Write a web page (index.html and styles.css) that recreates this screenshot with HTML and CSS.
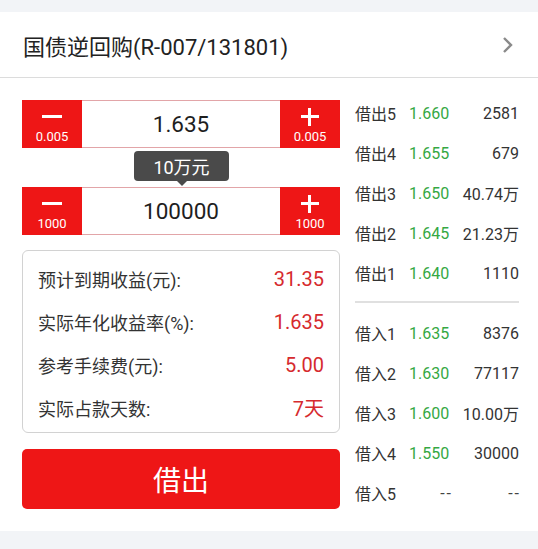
FILE: index.html
```html
<!DOCTYPE html>
<html lang="zh-CN">
<head>
    <meta charset="UTF-8">
    <meta name="viewport" content="width=device-width, initial-scale=1.0">
    <title>国债逆回购</title>
    <link rel="stylesheet" href="styles.css">
</head>
<body>
    <div class="page">
        <div class="header">
            <span class="title">国债逆回购(R-007/131801)</span>
            <svg class="chevron" width="12" height="18" viewBox="0 0 12 18">
                <path d="M2 2 L9 9 L2 16" fill="none" stroke="#8a8a8a" stroke-width="2.4"/>
            </svg>
        </div>

        <div class="main">
            <div class="left">
                <div class="stepper">
                    <div class="step-btn">
                        <span class="minus"></span>
                        <span class="step-val">0.005</span>
                    </div>
                    <div class="step-input">1.635</div>
                    <div class="step-btn">
                        <span class="plus"></span>
                        <span class="step-val">0.005</span>
                    </div>
                </div>

                <div class="stepper stepper-amount">
                    <div class="tooltip">10万元</div>
                    <div class="step-btn">
                        <span class="minus"></span>
                        <span class="step-val">1000</span>
                    </div>
                    <div class="step-input">100000</div>
                    <div class="step-btn">
                        <span class="plus"></span>
                        <span class="step-val">1000</span>
                    </div>
                </div>

                <div class="info">
                    <div class="info-row"><span>预计到期收益(元):</span><span class="info-val">31.35</span></div>
                    <div class="info-row"><span>实际年化收益率(%):</span><span class="info-val">1.635</span></div>
                    <div class="info-row"><span>参考手续费(元):</span><span class="info-val">5.00</span></div>
                    <div class="info-row"><span>实际占款天数:</span><span class="info-val">7天</span></div>
                </div>

                <button class="lend-btn">借出</button>
            </div>

            <div class="book">
                <div class="book-row"><span>借出5</span><span class="price">1.660</span><span class="vol">2581</span></div>
                <div class="book-row"><span>借出4</span><span class="price">1.655</span><span class="vol">679</span></div>
                <div class="book-row"><span>借出3</span><span class="price">1.650</span><span class="vol">40.74万</span></div>
                <div class="book-row"><span>借出2</span><span class="price">1.645</span><span class="vol">21.23万</span></div>
                <div class="book-row"><span>借出1</span><span class="price">1.640</span><span class="vol">1110</span></div>
                <div class="book-sep"></div>
                <div class="book-row"><span>借入1</span><span class="price">1.635</span><span class="vol">8376</span></div>
                <div class="book-row"><span>借入2</span><span class="price">1.630</span><span class="vol">77117</span></div>
                <div class="book-row"><span>借入3</span><span class="price">1.600</span><span class="vol">10.00万</span></div>
                <div class="book-row"><span>借入4</span><span class="price">1.550</span><span class="vol">30000</span></div>
                <div class="book-row"><span>借入5</span><span class="price dash">--</span><span class="vol dash">--</span></div>
            </div>
        </div>
    </div>
</body>
</html>
```

FILE: styles.css
```css
body {
    margin: 0;
    padding: 12px 0 0;
    background-color: #f2f4f7;
    font-family: Roboto, "Noto Sans CJK SC", sans-serif;
    color: #333;
}
.page {
    background-color: #fff;
    height: 519px;
}
.header {
    height: 65px;
    display: flex;
    align-items: center;
    justify-content: space-between;
    padding: 0 24px 0 23px;
    border-bottom: 1px solid #dcdcdc;
}
.title {
    font-size: 22px;
    color: #222;
}
.main {
    display: flex;
    padding: 15px 19px 0 22px;
    gap: 15px;
}
.left {
    width: 318px;
    padding-top: 7px;
}
.stepper {
    position: relative;
    display: flex;
    height: 48px;
}
.stepper-amount {
    margin-top: 39px;
}
.step-btn {
    width: 60px;
    background-color: #ee1616;
    color: #fff;
    display: flex;
    flex-direction: column;
    align-items: center;
    justify-content: flex-end;
    padding-bottom: 3px;
    box-sizing: border-box;
}
.step-val {
    font-size: 13px;
    line-height: 16px;
}
.minus {
    width: 20px;
    height: 3px;
    background: #fff;
    margin-bottom: 11px;
}
.plus {
    position: relative;
    width: 18px;
    height: 18px;
    margin-bottom: 3px;
}
.plus::before,
.plus::after {
    content: "";
    position: absolute;
    background: #fff;
}
.plus::before {
    left: 0;
    top: 7px;
    width: 18px;
    height: 3px;
}
.plus::after {
    left: 7px;
    top: 0;
    width: 3px;
    height: 18px;
}
.step-input {
    flex: 1;
    border-top: 1px solid #e2a5a8;
    border-bottom: 1px solid #e2a5a8;
    display: flex;
    align-items: center;
    justify-content: center;
    font-size: 22.5px;
    color: #1e1e1e;
}
.tooltip {
    position: absolute;
    left: 112px;
    top: -36px;
    width: 95px;
    height: 30px;
    background-color: #4a4a4a;
    color: #fff;
    border-radius: 4px;
    font-size: 18px;
    display: flex;
    align-items: center;
    justify-content: center;
}
.tooltip::after {
    content: "";
    position: absolute;
    left: 43px;
    bottom: -5px;
    border-left: 5px solid transparent;
    border-right: 5px solid transparent;
    border-top: 5px solid #4a4a4a;
}
.info {
    margin-top: 15px;
    border: 1px solid #d2d2d2;
    border-radius: 6px;
    padding: 6px 15px 3px 15px;
}
.info-row {
    height: 43px;
    display: flex;
    align-items: center;
    justify-content: space-between;
    font-size: 18px;
    color: #333;
}
.info-val {
    font-size: 20px;
    color: #d62a2e;
}
.lend-btn {
    display: block;
    width: 100%;
    height: 60px;
    margin-top: 16px;
    border: none;
    border-radius: 5px;
    background-color: #ee1616;
    color: #fff;
    font-family: "Noto Sans CJK SC", sans-serif;
    font-size: 28px;
}
.book {
    flex: 1;
}
.book-row {
    height: 40px;
    display: grid;
    grid-template-columns: 54px 42px 1fr;
    align-items: center;
    font-size: 16px;
    color: #333;
}
.price {
    color: #35a843;
}
.dash {
    color: #444;
    text-align: right;
    letter-spacing: 2px;
    margin-right: -2px;
}
.vol {
    text-align: right;
}
.book-sep {
    height: 2px;
    background-color: #e0e0e0;
    margin: 8px 0 10px;
}
```
